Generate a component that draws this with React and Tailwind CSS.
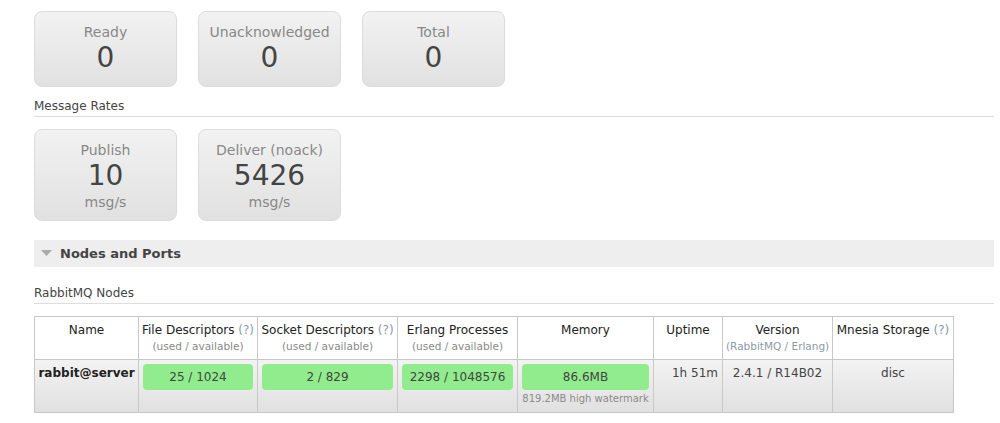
import React from "react";

const font = { fontFamily: '"DejaVu Sans", Verdana, sans-serif' };

function StatBox({ label, value, unit }) {
  return (
    <div
      className={`w-[143px] ${unit ? "h-[92px]" : "h-[76px]"} rounded-[8px] border border-[#dcdcdc] bg-gradient-to-b from-[#f2f2f2] to-[#e1e1e1] flex flex-col items-center pt-[11px]`}
    >
      <div className="text-[14px] leading-[18px] text-[#888]">{label}</div>
      <div className="text-[28px] leading-[34px] text-[#444]">{value}</div>
      {unit && <div className="text-[14px] leading-[18px] text-[#888]">{unit}</div>}
    </div>
  );
}

function Q() {
  return <span className="text-[#8c9aa6]">(?)</span>;
}

function Sub({ children }) {
  return <div className="text-[10.5px] leading-[15px] text-[#8a8a8a]">{children}</div>;
}

function Bar({ children }) {
  return (
    <div className="h-[26px] rounded-[4px] bg-[#90ec8c] text-[12px] leading-[26px] text-[#444] text-center">
      {children}
    </div>
  );
}

export default function App() {
  const cols = [
    { w: "w-[104px]", title: "Name" },
    { w: "w-[119px]", title: <>File Descriptors <Q /></>, sub: "(used / available)" },
    { w: "w-[140px]", title: <>Socket Descriptors <Q /></>, sub: "(used / available)" },
    { w: "w-[120px]", title: "Erlang Processes", sub: "(used / available)" },
    { w: "w-[136px]", title: "Memory" },
    { w: "w-[69px]", title: "Uptime" },
    { w: "w-[110px]", title: "Version", sub: <span className="text-[#8c9aa6]">(RabbitMQ / Erlang)</span> },
    { w: "w-[121px]", title: <>Mnesia Storage <Q /></> },
  ];

  return (
    <div className="w-[1000px] h-[423px] bg-white overflow-hidden pl-[34px] pr-[6px] pt-[11px]" style={font}>
      <div className="flex gap-[21px]">
        <StatBox label="Ready" value="0" />
        <StatBox label="Unacknowledged" value="0" />
        <StatBox label="Total" value="0" />
      </div>

      <div className="mt-[11px] text-[12px] leading-[16px] text-[#444] pb-[2px] border-b border-[#ddd]">
        Message Rates
      </div>

      <div className="flex gap-[21px] mt-[12px]">
        <StatBox label="Publish" value="10" unit="msg/s" />
        <StatBox label="Deliver (noack)" value="5426" unit="msg/s" />
      </div>

      <div className="mt-[19px] h-[27px] bg-[#eeeeee] flex items-center pl-[7px]">
        <svg width="11" height="7" viewBox="0 0 11 7" className="mr-[8px]">
          <polygon points="0,0 11,0 5.5,6" fill="#aaa" />
        </svg>
        <span className="text-[13px] font-bold text-[#444]">Nodes and Ports</span>
      </div>

      <div className="mt-[18px] text-[12px] leading-[16px] text-[#444] pb-[2px] border-b border-[#ddd]">
        RabbitMQ Nodes
      </div>

      <table className="mt-[12px] border-collapse table-fixed w-[919px] text-[12px] text-[#222]">
        <thead>
          <tr className="h-[43px] bg-white">
            {cols.map((c, i) => (
              <th
                key={i}
                className={`${c.w} border border-[#c8c8c8] font-normal align-top text-center pt-[5px] px-[3px] whitespace-nowrap`}
              >
                <div className="leading-[17px]">{c.title}</div>
                {c.sub && <Sub>{c.sub}</Sub>}
              </th>
            ))}
          </tr>
        </thead>
        <tbody>
          <tr className="h-[53px] bg-gradient-to-b from-[#f3f3f3] to-[#e0e0e0]">
            <td className="border border-[#c8c8c8] align-top text-center pt-[4px] font-bold text-[#222] whitespace-nowrap">
              rabbit@server
            </td>
            <td className="border border-[#c8c8c8] align-top px-[4px] pt-[4px]">
              <Bar>25 / 1024</Bar>
            </td>
            <td className="border border-[#c8c8c8] align-top px-[4px] pt-[4px]">
              <Bar>2 / 829</Bar>
            </td>
            <td className="border border-[#c8c8c8] align-top px-[4px] pt-[4px]">
              <Bar>2298 / 1048576</Bar>
            </td>
            <td className="border border-[#c8c8c8] align-top px-[4px] pt-[4px]">
              <Bar>86.6MB</Bar>
              <div className="text-[10px] leading-[16px] text-[#8a8a8a] text-center mt-[1px] whitespace-nowrap">
                819.2MB high watermark
              </div>
            </td>
            <td className="border border-[#c8c8c8] align-top text-right pr-[4px] pt-[4px] text-[#444] whitespace-nowrap">
              1h 51m
            </td>
            <td className="border border-[#c8c8c8] align-top text-center pt-[4px] text-[#444] whitespace-nowrap">
              2.4.1 / R14B02
            </td>
            <td className="border border-[#c8c8c8] align-top text-center pt-[4px] text-[#444]">
              disc
            </td>
          </tr>
        </tbody>
      </table>
    </div>
  );
}
